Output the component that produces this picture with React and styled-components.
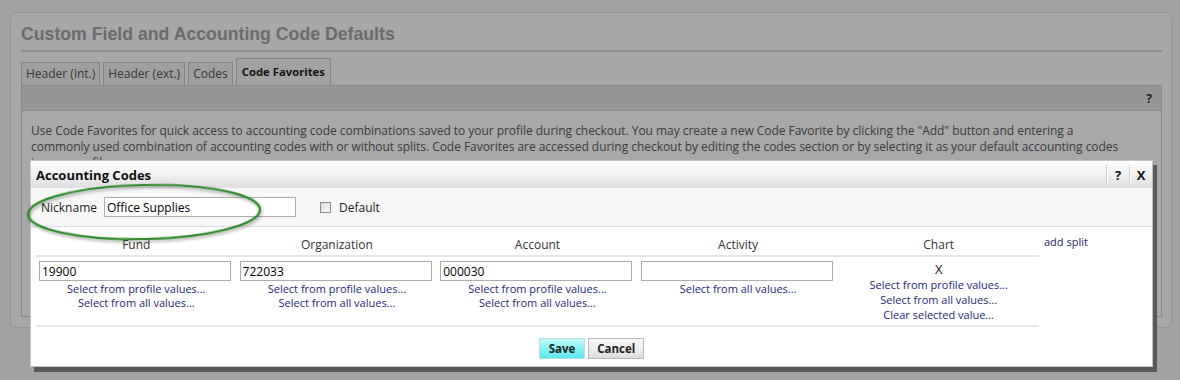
import React from 'react';
import styled, { createGlobalStyle } from 'styled-components';

const GlobalStyle = createGlobalStyle`
	html, body {
		margin: 0;
		padding: 0;
		background: #f6f6f6;
	}
	body {
		font-family: 'Open Sans', 'Noto Sans', sans-serif;
		color: #333;
	}
`;

const Page = styled.div`
	position: relative;
	width: 1180px;
	height: 380px;
	overflow: hidden;
	background: #f6f6f6;
	padding-top: 12px;
	box-sizing: border-box;
`;

const Container = styled.div`
	margin-left: 10px;
	width: 1162px;
	height: 316px;
	box-sizing: border-box;
	padding: 11px 9px 10px 10px;
	background: #fdfdfd;
	border: 1px solid #e2e2e2;
	border-radius: 6px;
	display: flex;
	flex-direction: column;
`;

const Title = styled.h1`
	margin: 0;
	font-family: 'Liberation Sans', Arial, sans-serif;
	font-size: 17.7px;
	line-height: 21px;
	font-weight: bold;
	color: #a4a4a4;
	padding-bottom: 5px;
	border-bottom: 2px solid #d6d6d6;
`;

const Tabs = styled.div`
	display: flex;
	align-items: flex-end;
	gap: 3px;
	height: 33px;
`;

const Tab = styled.div`
	box-sizing: border-box;
	height: ${p => (p.$active ? '27px' : '23px')};
	padding: 0 ${p => (p.$active ? '5px' : '4px')};
	font-size: ${p => (p.$active ? '11.3px' : '12px')};
	font-weight: ${p => (p.$active ? 700 : 400)};
	line-height: ${p => (p.$active ? '25px' : '22px')};
	color: ${p => (p.$active ? '#222' : '#555')};
	background: ${p => (p.$active ? '#f6f6f6' : '#f2f2f2')};
	border: 1px solid #c9c9c9;
	border-bottom: none;
	white-space: nowrap;
`;

const Panel = styled.div`
	flex: 1;
	border: 1px solid #cdcdcd;
	background: #fff;
`;

const PanelBar = styled.div`
	height: 24px;
	background: #e4e4e4;
	border-bottom: 1px solid #d0d0d0;
	display: flex;
	justify-content: flex-end;
	align-items: center;
	padding-right: 9px;
	font-size: 12px;
	font-weight: 700;
	color: #333;
`;

const Intro = styled.p`
	margin: 0;
	padding: 12px 38px 0 9px;
	font-size: 12px;
	letter-spacing: -0.04px;
	line-height: 16px;
	color: #5c5c5c;
`;

const Dim = styled.div`
	position: absolute;
	inset: 0;
	background: rgba(0, 0, 0, 0.34);
`;

const Dialog = styled.div`
	position: absolute;
	left: 30px;
	top: 160px;
	width: 1123px;
	height: 207px;
	box-sizing: border-box;
	background: #fff;
	border: 1px solid #c4c4c4;
	box-shadow: 4px 5px 0 #595959;
	display: flex;
	flex-direction: column;
`;

const DialogHead = styled.div`
	height: 27px;
	display: flex;
	align-items: center;
	justify-content: space-between;
	padding-left: 5px;
	background: linear-gradient(#ffffff, #f4f4f4 40%, #dedede);
	font-size: 13px;
	font-weight: 700;
	color: #111;
`;

const HeadActions = styled.div`
	display: flex;
	align-items: stretch;
	height: 100%;
`;

const HeadButton = styled.span`
	width: 22px;
	display: flex;
	align-items: center;
	justify-content: center;
	border-left: 1px solid #d2d2d2;
	box-shadow: inset 1px 0 0 #fafafa;
	font-size: 13px;
	font-weight: 700;
	margin: 4px 0;
`;

const NickRow = styled.div`
	height: 38px;
	display: flex;
	align-items: center;
	padding-left: 10px;
	background: #f7f7f7;
	border-bottom: 1px solid #dcdcdc;
	font-size: 12px;
	color: #222;
`;

const TextBox = styled.input`
	box-sizing: border-box;
	width: 192px;
	height: 20px;
	border: 1px solid #acacac;
	padding: 0 2px;
	font-family: 'Open Sans', sans-serif;
	font-size: 12px;
	color: #000;
	background: #fff;
	outline: none;
`;

const NickBox = styled(TextBox)`
	margin-left: 7px;
`;

const Check = styled.span`
	width: 11px;
	height: 11px;
	box-sizing: border-box;
	border: 1px solid #8e8f8f;
	background: linear-gradient(135deg, #dcdcdc, #fbfbfb);
	margin: 0 8px 0 24px;
`;

const CodesArea = styled.div`
	display: flex;
	align-items: flex-start;
	padding: 0 5px;
`;

const CodesTable = styled.div`
	width: 1003px;
`;

const Row = styled.div`
	display: grid;
	grid-template-columns: repeat(5, 1fr);
	border-bottom: 2px solid #e0e5ee;
`;

const HeadCell = styled.div`
	text-align: center;
	font-size: 12px;
	line-height: 16px;
	color: #333;
	padding: 10px 0 2px;
`;

const Cell = styled.div`
	padding: ${p => (p.$plain ? '5px' : '4px')} 3px 0;
	height: 63px;
	display: flex;
	flex-direction: column;
	align-items: ${p => (p.$plain ? 'center' : 'stretch')};
	text-align: center;
	line-height: ${p => (p.$plain ? '15px' : '14px')};
`;

const CodeBox = styled(TextBox)`
	width: 192px;
	margin-bottom: 1px;
`;

const Cross = styled.span`
	font-size: 13px;
	color: #222;
`;

const Pick = styled.a`
	font-size: 11px;
	color: #242a76;
	text-decoration: none;
	cursor: pointer;
	white-space: nowrap;
`;

const AddSplit = styled.a`
	margin: 7px 0 0 5px;
	font-size: 11px;
	color: #1d2466;
	cursor: pointer;
`;

const Actions = styled.div`
	display: flex;
	justify-content: center;
	gap: 3px;
	padding-top: 11px;
`;

const Button = styled.button`
	height: 21px;
	box-sizing: border-box;
	padding: 0 ${p => (p.$primary ? '9px' : '8px')};
	font-family: 'Open Sans', sans-serif;
	font-size: 11.5px;
	font-weight: 700;
	color: #222;
	border: 1px solid ${p => (p.$primary ? '#b6dede' : '#b9b9b9')};
	background: ${p =>
		p.$primary
			? 'linear-gradient(#c7fafa, #7ff0f2 55%, #5fe6ea)'
			: 'linear-gradient(#f7f7f7, #ececec 55%, #dcdcdc)'};
	cursor: pointer;
`;

const Highlight = styled.svg`
	position: absolute;
	left: 24px;
	top: 180px;
	overflow: visible;
`;

const columns = [
	{ name: 'Fund', value: '19900', profile: true },
	{ name: 'Organization', value: '722033', profile: true },
	{ name: 'Account', value: '000030', profile: true },
	{ name: 'Activity', value: '', profile: false },
];

export default function App() {
	return (
		<>
			<GlobalStyle />
			<Page>
				<Container>
					<Title>Custom Field and Accounting Code Defaults</Title>
					<Tabs>
						<Tab>Header (int.)</Tab>
						<Tab>Header (ext.)</Tab>
						<Tab>Codes</Tab>
						<Tab $active>Code Favorites</Tab>
					</Tabs>
					<Panel>
						<PanelBar>?</PanelBar>
						<Intro>
							Use Code Favorites for quick access to accounting code combinations saved to your profile
							during checkout. You may create a new Code Favorite by clicking the "Add" button and entering a
							commonly used combination of accounting codes with or without splits. Code Favorites are
							accessed during checkout by editing the codes section or by selecting it as your default
							accounting codes in your profile.
						</Intro>
					</Panel>
				</Container>
				<Dim />
				<Dialog>
					<DialogHead>
						Accounting Codes
						<HeadActions>
							<HeadButton>?</HeadButton>
							<HeadButton>X</HeadButton>
						</HeadActions>
					</DialogHead>
					<NickRow>
						Nickname
						<NickBox defaultValue="Office Supplies" />
						<Check />
						Default
					</NickRow>
					<CodesArea>
						<CodesTable>
							<Row>
								{columns.map(c => (
									<HeadCell key={c.name}>{c.name}</HeadCell>
								))}
								<HeadCell>Chart</HeadCell>
							</Row>
							<Row>
								{columns.map(c => (
									<Cell key={c.name}>
										<CodeBox defaultValue={c.value} />
										{c.profile && <Pick>Select from profile values...</Pick>}
										<Pick>Select from all values...</Pick>
									</Cell>
								))}
								<Cell $plain>
									<Cross>X</Cross>
									<Pick>Select from profile values...</Pick>
									<Pick>Select from all values...</Pick>
									<Pick>Clear selected value...</Pick>
								</Cell>
							</Row>
						</CodesTable>
						<AddSplit>add split</AddSplit>
					</CodesArea>
					<Actions>
						<Button $primary>Save</Button>
						<Button>Cancel</Button>
					</Actions>
				</Dialog>
				<Highlight width="240" height="64" viewBox="0 0 240 64">
					<defs>
						<filter id="soft" x="-10%" y="-30%" width="120%" height="160%">
							<feDropShadow dx="1" dy="2" stdDeviation="1.5" floodColor="#000" floodOpacity="0.35" />
						</filter>
					</defs>
					<ellipse
						cx="120"
						cy="32"
						rx="116"
						ry="27"
						transform="rotate(-1.2 120 32)"
						fill="none"
						stroke="#2f8a2c"
						strokeWidth="2.2"
						filter="url(#soft)"
					/>
				</Highlight>
			</Page>
		</>
	);
}
